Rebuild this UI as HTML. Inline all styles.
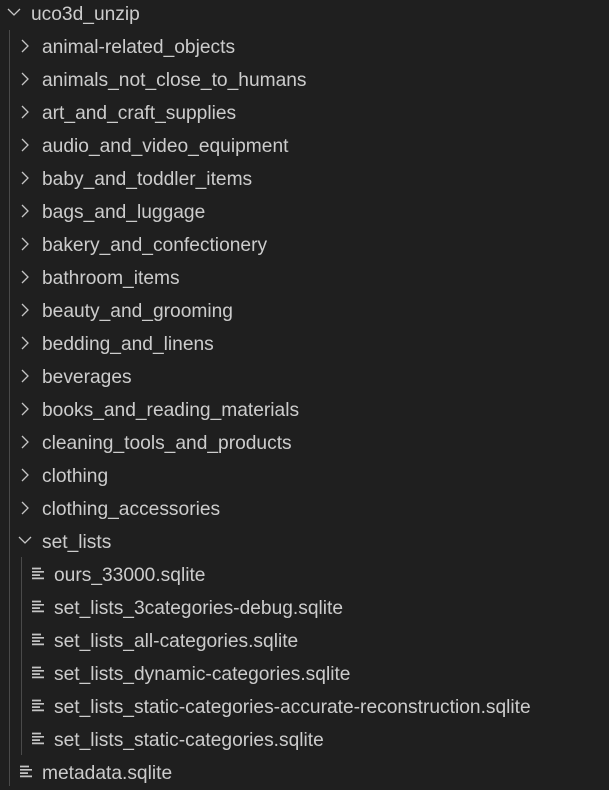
<!DOCTYPE html>
<html><head><style>
body{margin:0;background:#1f1f1f;width:609px;height:786px;overflow:hidden;font-family:"Liberation Sans",sans-serif;color:#cccccc;font-size:19.2px;position:relative}
.r{position:absolute;height:33px;line-height:33px;white-space:nowrap}
.g{position:absolute;width:1px;background:#4a4a4a}
svg{position:absolute}
</style></head><body>
<div class="g" style="left:9px;top:30px;height:756px"></div>
<div class="g" style="left:21px;top:557px;height:198px"></div>
<div id="c"></div>
<script>
var items=[["uco3d_unzip",0,"d"],
["animal-related_objects",1,"c"],["animals_not_close_to_humans",1,"c"],["art_and_craft_supplies",1,"c"],["audio_and_video_equipment",1,"c"],["baby_and_toddler_items",1,"c"],["bags_and_luggage",1,"c"],["bakery_and_confectionery",1,"c"],["bathroom_items",1,"c"],["beauty_and_grooming",1,"c"],["bedding_and_linens",1,"c"],["beverages",1,"c"],["books_and_reading_materials",1,"c"],["cleaning_tools_and_products",1,"c"],["clothing",1,"c"],["clothing_accessories",1,"c"],["set_lists",1,"d"],
["ours_33000.sqlite",2,"f"],["set_lists_3categories-debug.sqlite",2,"f"],["set_lists_all-categories.sqlite",2,"f"],["set_lists_dynamic-categories.sqlite",2,"f"],["set_lists_static-categories-accurate-reconstruction.sqlite",2,"f"],["set_lists_static-categories.sqlite",2,"f"],["metadata.sqlite",1,"f"]];
var h="";
items.forEach(function(it,i){
var y=i*33-2, tx=[31,42,54][it[1]];
var ix=tx-25;
if(it[2]=="d") h+='<svg style="left:'+(ix)+'px;top:'+(y+6)+'px" width="16" height="16" viewBox="0 0 16 16"><path d="M2 5 L8 11 L14 5" fill="none" stroke="#c5c5c5" stroke-width="1.3"/></svg>';
else if(it[2]=="c") h+='<svg style="left:'+(ix)+'px;top:'+(y+7)+'px" width="16" height="16" viewBox="0 0 16 16"><path d="M5 2 L11 8 L5 14" fill="none" stroke="#c5c5c5" stroke-width="1.3"/></svg>';
else h+='<svg style="left:'+(tx-22)+'px;top:'+(y+8)+'px" width="13" height="13" viewBox="0 0 13 13"><g stroke="#c5c5c5" stroke-width="1.7"><path d="M0 1.5H9M0 4.8H12M0 8.1H8M0 11.4H12"/></g></svg>';
h+='<div class="r" style="left:'+tx+'px;top:'+y+'px">'+it[0]+'</div>';
});
document.getElementById("c").innerHTML=h;
</script>
</body></html>
